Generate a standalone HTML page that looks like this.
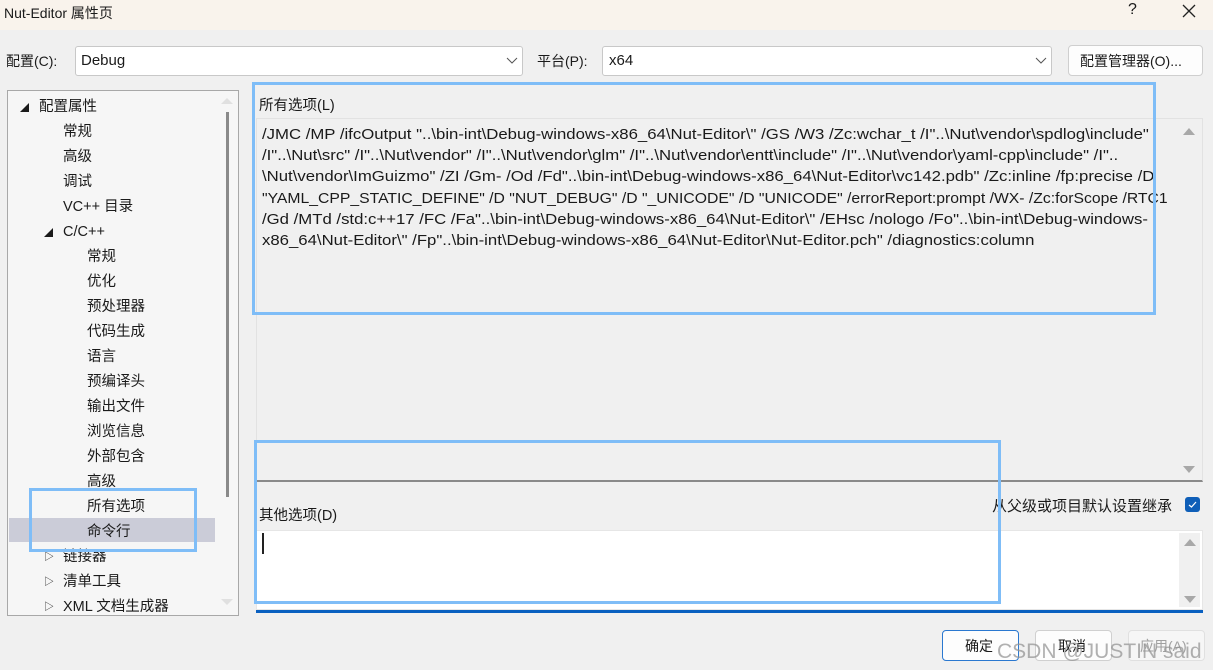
<!DOCTYPE html><html><head><meta charset="utf-8"><style>
*{margin:0;padding:0;box-sizing:border-box}
body{width:1213px;height:670px;background:#f0f0f0;font-family:"Segoe UI","Liberation Sans","Noto Sans CJK SC",sans-serif;font-size:14px;color:#1a1a1a;position:relative;overflow:hidden}
.a{position:absolute}
.t{white-space:nowrap}
.hl{position:absolute;border:3px solid #7fbdf7}
</style></head><body>
<div class="a" style="left:0;top:0;width:1213px;height:30px;background:#f9f3ec"></div>
<div class="a t" style="left:4px;top:3px;font-size:14px">Nut-Editor 属性页</div>
<div class="a t" style="left:1128px;top:1px;font-size:16px">?</div>
<svg class="a" style="left:1182px;top:4px" width="14" height="14"><path d="M1 1L13 13M13 1L1 13" stroke="#222" stroke-width="1.3"/></svg>

<div class="a t" style="left:6px;top:51px">配置(C):</div>
<div class="a" style="left:75px;top:46px;width:448px;height:30px;background:#fff;border:1px solid #c8c8c8;border-radius:3px"></div>
<div class="a t" style="left:81px;top:52px;font-size:15px">Debug</div>
<svg class="a" style="left:506px;top:57px" width="12" height="8"><path d="M1 1L6 6L11 1" stroke="#555" fill="none"/></svg>
<div class="a t" style="left:537px;top:51px">平台(P):</div>
<div class="a" style="left:602px;top:46px;width:450px;height:30px;background:#fff;border:1px solid #c8c8c8;border-radius:3px"></div>
<div class="a t" style="left:609px;top:52px;font-size:15px">x64</div>
<svg class="a" style="left:1035px;top:57px" width="12" height="8"><path d="M1 1L6 6L11 1" stroke="#555" fill="none"/></svg>
<div class="a" style="left:1068px;top:45px;width:135px;height:31px;background:#fdfdfd;border:1px solid #cfcfcf;border-radius:4px"></div>
<div class="a t" style="left:1080px;top:51px">配置管理器(O)...</div>

<div class="a" style="left:7px;top:90px;width:232px;height:526px;background:#f6f6f6;border:1px solid #a8a8a8"></div>
<div class="a" style="left:9px;top:518px;width:206px;height:24px;background:#cbccd8"></div>
<div class="a" style="left:226px;top:112px;width:3px;height:385px;background:#8a8a8a"></div>
<svg class="a" style="left:219px;top:96px" width="16" height="10"><path d="M2 8L8 2L14 8Z" fill="#e0e0e0"/></svg>
<svg class="a" style="left:219px;top:597px" width="16" height="10"><path d="M2 2L8 8L14 2Z" fill="#e0e0e0"/></svg>
<div class="a" style="top:95px;left:0;line-height:25px;font-size:14.5px">
<div class="a t" style="left:20px;top:0"><span style="font-size:9px">◢</span></div>
<div class="a t" style="left:39px;top:0">配置属性</div>
<div class="a t" style="left:63px;top:25px">常规</div>
<div class="a t" style="left:63px;top:50px">高级</div>
<div class="a t" style="left:63px;top:75px">调试</div>
<div class="a t" style="left:63px;top:100px">VC++ 目录</div>
<div class="a t" style="left:44px;top:125px"><span style="font-size:9px">◢</span></div>
<div class="a t" style="left:63px;top:125px">C/C++</div>
<div class="a t" style="left:87px;top:150px">常规</div>
<div class="a t" style="left:87px;top:175px">优化</div>
<div class="a t" style="left:87px;top:200px">预处理器</div>
<div class="a t" style="left:87px;top:225px">代码生成</div>
<div class="a t" style="left:87px;top:250px">语言</div>
<div class="a t" style="left:87px;top:275px">预编译头</div>
<div class="a t" style="left:87px;top:300px">输出文件</div>
<div class="a t" style="left:87px;top:325px">浏览信息</div>
<div class="a t" style="left:87px;top:350px">外部包含</div>
<div class="a t" style="left:87px;top:375px">高级</div>
<div class="a t" style="left:87px;top:400px">所有选项</div>
<div class="a t" style="left:87px;top:425px">命令行</div>
<div class="a t" style="left:44px;top:450px;font-size:10px">▷</div>
<div class="a t" style="left:63px;top:450px">链接器</div>
<div class="a t" style="left:44px;top:475px;font-size:10px">▷</div>
<div class="a t" style="left:63px;top:475px">清单工具</div>
<div class="a t" style="left:44px;top:500px;font-size:10px">▷</div>
<div class="a t" style="left:63px;top:500px">XML 文档生成器</div>
</div>
<div class="hl" style="left:29px;top:488px;width:168px;height:64px"></div>

<div class="a t" style="left:259px;top:94px;font-size:14.5px">所有选项(L)</div>
<div class="a" style="left:256px;top:118px;width:947px;height:364px;background:#f0f0f0;border:1px solid #e2e2e2;border-bottom:2px solid #8a8a8a"></div>
<svg class="a" style="left:1182px;top:127px" width="14" height="10"><path d="M1 8L7 1L13 8Z" fill="#a8a8a8"/></svg>
<svg class="a" style="left:1182px;top:465px" width="14" height="10"><path d="M1 1L7 8L13 1Z" fill="#a8a8a8"/></svg>
<div class="a" style="left:262px;top:124px;font-size:15px;line-height:21.2px;transform:scaleX(1.116);transform-origin:0 0">
<div class="t">/JMC /MP /ifcOutput "..\bin-int\Debug-windows-x86_64\Nut-Editor\" /GS /W3 /Zc:wchar_t /I"..\Nut\vendor\spdlog\include"</div>
<div class="t">/I"..\Nut\src" /I"..\Nut\vendor" /I"..\Nut\vendor\glm" /I"..\Nut\vendor\entt\include" /I"..\Nut\vendor\yaml-cpp\include" /I"..</div>
<div class="t">\Nut\vendor\ImGuizmo" /ZI /Gm- /Od /Fd"..\bin-int\Debug-windows-x86_64\Nut-Editor\vc142.pdb" /Zc:inline /fp:precise /D</div>
<div class="t" style="transform:scaleX(0.94);transform-origin:0 0">"YAML_CPP_STATIC_DEFINE" /D "NUT_DEBUG" /D "_UNICODE" /D "UNICODE" /errorReport:prompt /WX- /Zc:forScope /RTC1</div>
<div class="t">/Gd /MTd /std:c++17 /FC /Fa"..\bin-int\Debug-windows-x86_64\Nut-Editor\" /EHsc /nologo /Fo"..\bin-int\Debug-windows-</div>
<div class="t">x86_64\Nut-Editor\" /Fp"..\bin-int\Debug-windows-x86_64\Nut-Editor\Nut-Editor.pch" /diagnostics:column</div>
</div>
<div class="hl" style="left:252px;top:82px;width:904px;height:233px"></div>

<div class="a t" style="left:259px;top:504px;font-size:14.5px">其他选项(D)</div>
<div class="a t" style="left:992px;top:495px;font-size:15px">从父级或项目默认设置继承</div>
<div class="a" style="left:1185px;top:497px;width:15px;height:15px;background:#0f5fb8;border-radius:3px"></div>
<svg class="a" style="left:1187px;top:500px" width="11" height="9"><path d="M2 5L4.5 7L9 2" stroke="#fff" fill="none" stroke-width="1.2"/></svg>
<div class="a" style="left:256px;top:530px;width:947px;height:80px;background:#fff;border:1px solid #e6e6e6"></div>
<div class="a" style="left:1179px;top:533px;width:21px;height:74px;background:#f0f0f0"></div>
<svg class="a" style="left:1183px;top:538px" width="14" height="10"><path d="M1 8L7 1L13 8Z" fill="#a8a8a8"/></svg>
<svg class="a" style="left:1183px;top:595px" width="14" height="10"><path d="M1 1L7 8L13 1Z" fill="#a8a8a8"/></svg>
<div class="a" style="left:262px;top:533px;width:2px;height:21px;background:#222"></div>
<div class="a" style="left:256px;top:610px;width:947px;height:3px;background:#0a60c0"></div>
<div class="hl" style="left:254px;top:440px;width:747px;height:164px"></div>

<div class="a" style="left:942px;top:630px;width:77px;height:31px;background:#fdfdfd;border:1px solid #2a78d0;border-radius:4px"></div>
<div class="a t" style="left:965px;top:636px">确定</div>
<div class="a" style="left:1035px;top:630px;width:77px;height:31px;background:#fdfdfd;border:1px solid #d0d0d0;border-radius:4px"></div>
<div class="a t" style="left:1058px;top:636px">取消</div>
<div class="a" style="left:1128px;top:630px;width:77px;height:31px;background:#f6f6f6;border:1px solid #e0e0e0;border-radius:4px"></div>
<div class="a t" style="left:1140px;top:636px;color:#a0a0a0">应用(A)</div>
<div class="a t" style="left:997px;top:640px;font-size:21px;color:rgba(150,150,150,0.75)">CSDN @JUSTIN said</div>
</body></html>
